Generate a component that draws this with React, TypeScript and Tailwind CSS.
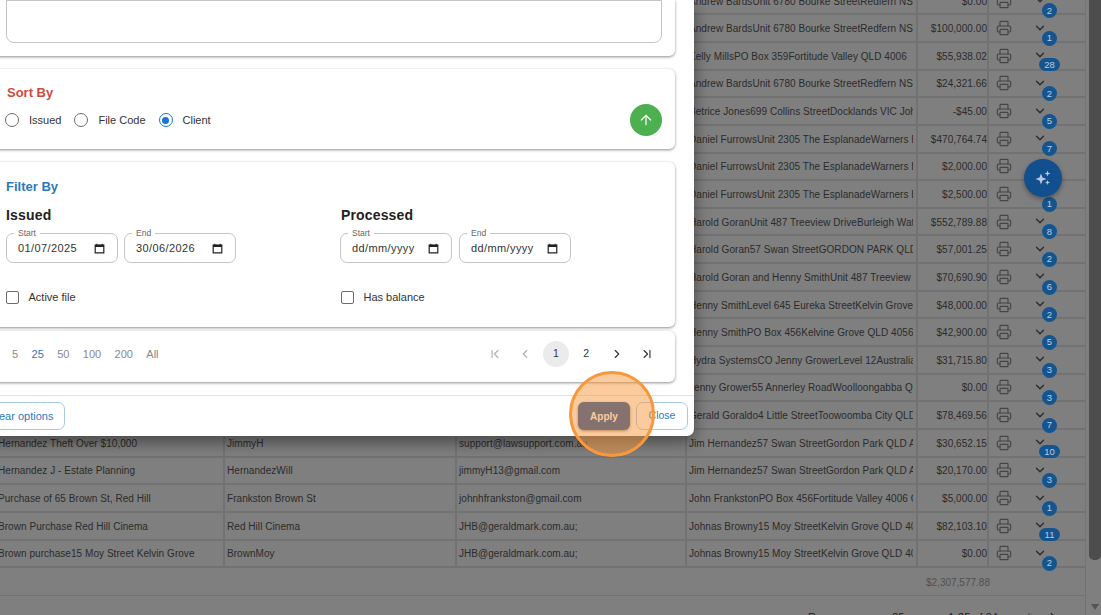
import { ArrowUp, ChevronDown, ChevronFirst, ChevronLast, ChevronLeft, ChevronRight, Printer } from "lucide-react";

const font = { fontFamily: '"Liberation Sans", Arial, sans-serif' };

type Row = { a: string; b: string; c: string; d: string; amt: string; n: string };
const rows: Row[] = [
  { a: "", b: "", c: "", d: "Andrew BardsUnit 6780 Bourke StreetRedfern NSW 2016", amt: "$0.00", n: "2" },
  { a: "", b: "", c: "", d: "Andrew BardsUnit 6780 Bourke StreetRedfern NSW 2016", amt: "$100,000.00", n: "1" },
  { a: "", b: "", c: "", d: "Kelly MillsPO Box 359Fortitude Valley QLD 4006", amt: "$55,938.02", n: "28" },
  { a: "", b: "", c: "", d: "Andrew BardsUnit 6780 Bourke StreetRedfern NSW 2016", amt: "$24,321.66", n: "2" },
  { a: "", b: "", c: "", d: "Betrice Jones699 Collins StreetDocklands VIC John", amt: "-$45.00", n: "5" },
  { a: "", b: "", c: "", d: "Daniel FurrowsUnit 2305 The EsplanadeWarners Bay", amt: "$470,764.74", n: "7" },
  { a: "", b: "", c: "", d: "Daniel FurrowsUnit 2305 The EsplanadeWarners Bay", amt: "$2,000.00", n: "" },
  { a: "", b: "", c: "", d: "Daniel FurrowsUnit 2305 The EsplanadeWarners Bay", amt: "$2,500.00", n: "1" },
  { a: "", b: "", c: "", d: "Harold GoranUnit 487 Treeview DriveBurleigh Waters", amt: "$552,789.88", n: "8" },
  { a: "", b: "", c: "", d: "Harold Goran57 Swan StreetGORDON PARK QLD 4031", amt: "$57,001.25", n: "2" },
  { a: "", b: "", c: "", d: "Harold Goran and Henny SmithUnit 487 Treeview Drive", amt: "$70,690.90", n: "6" },
  { a: "", b: "", c: "", d: "Henny SmithLevel 645 Eureka StreetKelvin Grove QLD", amt: "$48,000.00", n: "2" },
  { a: "", b: "", c: "", d: "Henny SmithPO Box 456Kelvine Grove QLD 4056", amt: "$42,900.00", n: "5" },
  { a: "", b: "", c: "", d: "Hydra SystemsCO Jenny GrowerLevel 12Australia", amt: "$31,715.80", n: "3" },
  { a: "", b: "", c: "", d: "Jenny Grower55 Annerley RoadWoolloongabba QLD", amt: "$0.00", n: "3" },
  { a: "", b: "", c: "", d: "Gerald Goraldo4 Little StreetToowoomba City QLD 4350", amt: "$78,469.56", n: "7" },
  { a: "Hernandez Theft Over $10,000", b: "JimmyH", c: "support@lawsupport.com.au", d: "Jim Hernandez57 Swan StreetGordon Park QLD Australia", amt: "$30,652.15", n: "10" },
  { a: "Hernandez J - Estate Planning", b: "HernandezWill", c: "jimmyH13@gmail.com", d: "Jim Hernandez57 Swan StreetGordon Park QLD Australia", amt: "$20,170.00", n: "3" },
  { a: "Purchase of 65 Brown St, Red Hill", b: "Frankston Brown St", c: "johnhfrankston@gmail.com", d: "John FrankstonPO Box 456Fortitude Valley 4006 QLD", amt: "$5,000.00", n: "1" },
  { a: "Brown Purchase Red Hill Cinema", b: "Red Hill Cinema", c: "JHB@geraldmark.com.au;", d: "Johnas Browny15 Moy StreetKelvin Grove QLD 4059", amt: "$82,103.10", n: "11" },
  { a: "Brown purchase15 Moy Street Kelvin Grove", b: "BrownMoy", c: "JHB@geraldmark.com.au;", d: "Johnas Browny15 Moy StreetKelvin Grove QLD 4059", amt: "$0.00", n: "2" },
];

const cols = "grid grid-cols-[234px_232px_230px_231px_71px_97px]";

function TableRow({ r }: { r: Row }) {
  const cell = "flex items-center overflow-hidden whitespace-nowrap border-r-2 border-[#727272] pt-[1px] pl-[2px]";
  return (
    <div className={`${cols} h-[27.65px] border-b-2 border-[#727272] text-[10px] tracking-[0.05px] text-[#2b2b2b]`}>
      <div className={`${cell} pl-[7px]`}>{r.a}</div>
      <div className={cell}>{r.b}</div>
      <div className={cell}>{r.c}</div>
      <div className={`${cell} pr-[3px]`}><span className="overflow-hidden">{r.d}</span></div>
      <div className={`${cell} justify-end pr-0`}>{r.amt}</div>
      <div className="relative flex items-center border-r border-[#757575]">
        <Printer size={16} strokeWidth={1.7} className="ml-[7px] text-[#454545]" />
        <ChevronDown size={14} strokeWidth={2.2} className="ml-[21px] -mt-[1px] text-[#2a2a2a]" />
        {r.n && (
          <span className={`absolute top-[15.5px] z-10 flex items-center justify-center rounded-full bg-[#15558f] text-[9.5px] text-[#b9cde2] ${r.n.length > 1 ? "left-[50px] h-[13px] w-[21px]" : "left-[53px] h-[15px] w-[15px]"}`}>
            {r.n}
          </span>
        )}
      </div>
    </div>
  );
}

function Radio({ label, checked }: { label: string; checked?: boolean }) {
  return (
    <label className="flex items-center gap-[10px]">
      <span className={`flex h-[14px] w-[14px] items-center justify-center rounded-full border-[1.5px] ${checked ? "border-[#1976d2]" : "border-[#6b6b6b]"}`}>
        {checked && <span className="h-[7px] w-[7px] rounded-full bg-[#1976d2]" />}
      </span>
      <span className="text-[11px] text-[#333]">{label}</span>
    </label>
  );
}

function Calendar() {
  return (
    <svg width="11" height="11" viewBox="0 0 11 11" className="shrink-0">
      <path d="M1.2 2.2h8.6v7.6H1.2z" fill="none" stroke="#222" strokeWidth="1.2" />
      <path d="M1 1.8h9v2.2H1z" fill="#222" />
      <path d="M2.8 .8v1.4M8.2 .8v1.4" stroke="#222" strokeWidth="1" />
    </svg>
  );
}

function DateField({ label, value, w }: { label: string; value: string; w: string }) {
  return (
    <div className={`relative flex h-[30px] items-center justify-between rounded-[7px] border border-[#c4c4c4] pl-[11px] pr-[12px] ${w}`}>
      <span className="absolute -top-[6px] left-[7px] bg-white px-[4px] text-[8.5px] leading-[10px] text-[#666]">{label}</span>
      <span className="text-[11px] tracking-[0.4px] text-[#333]">{value}</span>
      <Calendar />
    </div>
  );
}

function Check({ label }: { label: string }) {
  return (
    <label className="flex items-center gap-[9.5px]">
      <span className="h-[13px] w-[13px] rounded-[2px] border-[1.5px] border-[#6b6b6b]" />
      <span className="text-[11px] text-[#333]">{label}</span>
    </label>
  );
}

const cardShadow = "shadow-[0_1px_3px_rgba(0,0,0,0.45)]";

function Modal() {
  return (
    <div className="absolute -left-[20px] top-0 z-20 flex h-[436px] w-[714px] flex-col rounded-b-[7px] bg-white shadow-[0_6px_16px_rgba(0,0,0,0.45)]">
      <div className="pl-[20px] pr-[19px]">
        <div className={`-ml-[20px] h-[56px] rounded-b-[6px] bg-white pl-[26px] pr-[13px] ${cardShadow}`}>
          <div className="h-[43px] rounded-b-[8px] border border-[#c4c4c4]" />
        </div>

        <div className={`-ml-[20px] mt-[13px] flex h-[80px] rounded-[6px] bg-white pl-[25px] pr-[13px] pt-[15px] ${cardShadow}`}>
          <div className="flex-1">
            <div className="pl-[2px] text-[13px] font-bold leading-[18px] text-[#cf4a41]">Sort By</div>
            <div className="mt-[10px] flex gap-[13px]">
              <Radio label="Issued" />
              <Radio label="File Code" />
              <Radio label="Client" checked />
            </div>
          </div>
          <div className="mt-[20px] flex h-[32px] w-[32px] items-center justify-center rounded-full bg-[#4caf50]">
            <ArrowUp size={16} strokeWidth={1.8} className="text-white" />
          </div>
        </div>

        <div className={`-ml-[20px] mt-[13px] h-[165px] rounded-[6px] bg-white pl-[26px] pr-[13px] pt-[16px] ${cardShadow}`}>
          <div className="text-[13px] font-bold leading-[18px] text-[#2b7bba]">Filter By</div>
          <div className="mt-[11px] grid grid-cols-[335px_1fr]">
            <div>
              <div className="text-[14px] font-bold leading-[17px] tracking-[0.2px] text-[#222]">Issued</div>
              <div className="mt-[9px] flex gap-[6px]">
                <DateField label="Start" value="01/07/2025" w="w-[112px]" />
                <DateField label="End" value="30/06/2026" w="w-[112px]" />
              </div>
              <div className="mt-[26px]"><Check label="Active file" /></div>
            </div>
            <div>
              <div className="text-[14px] font-bold leading-[17px] tracking-[0.15px] text-[#222]">Processed</div>
              <div className="-ml-[1px] mt-[9px] flex gap-[7px]">
                <DateField label="Start" value="dd/mm/yyyy" w="w-[112px]" />
                <DateField label="End" value="dd/mm/yyyy" w="w-[112px]" />
              </div>
              <div className="mt-[26px]"><Check label="Has balance" /></div>
            </div>
          </div>
        </div>

        <div className={`-ml-[20px] mt-[4px] flex h-[51px] items-center justify-between rounded-[6px] bg-white pb-[5px] pl-[32px] pr-[15px] ${cardShadow}`}>
          <div className="flex gap-[13.4px] text-[11px] text-[#888]">
            <span>5</span>
            <span className="text-[#2b7bba]">25</span>
            <span>50</span>
            <span>100</span>
            <span>200</span>
            <span>All</span>
          </div>
          <div className="flex items-center gap-[4.4px] text-[10.5px] text-[#333]">
            <span className="flex h-[26px] w-[26px] items-center justify-center"><ChevronFirst size={14} className="text-[#b0b0b0]" /></span>
            <span className="flex h-[26px] w-[26px] items-center justify-center"><ChevronLeft size={14} className="text-[#b0b0b0]" /></span>
            <span className="flex h-[26px] w-[26px] items-center justify-center rounded-full bg-[#ebebeb]">1</span>
            <span className="flex h-[26px] w-[26px] items-center justify-center">2</span>
            <span className="flex h-[26px] w-[26px] items-center justify-center"><ChevronRight size={14} className="text-[#333]" /></span>
            <span className="flex h-[26px] w-[26px] items-center justify-center"><ChevronLast size={14} className="text-[#333]" /></span>
          </div>
        </div>
      </div>

      <div className="mt-[13px] flex h-[41px] items-start justify-between border-t border-[#e0e0e0] pl-[7px] pr-[6px] pt-[6px] text-[10.5px]">
        <button className="-ml-[10px] h-[28px] w-[88px] whitespace-nowrap rounded-[7px] border border-[#a5cbe4] text-[11px] text-[#2b7bba]">Clear options</button>
        <div className="flex gap-[6px]">
          <button className="h-[28px] w-[52px] rounded-[6px] bg-[#134a9f] text-[10px] font-bold text-white shadow-[0_1px_3px_rgba(0,0,0,0.5)]">Apply</button>
          <button className="h-[28px] w-[52px] rounded-[7px] border border-[#a5cbe4] text-[#2b7bba]">Close</button>
        </div>
      </div>
    </div>
  );
}

export default function App() {
  return (
    <div style={font} className="relative h-[615px] w-[1101px] overflow-hidden bg-[#7f7f7f]">
      <div className="flex h-full">
        <div className="-ml-[9px] -mt-[12.3px] w-[1095px] shrink-0">
          {rows.map((r, i) => <TableRow key={i} r={r} />)}
          <div className={`${cols} h-[28px] items-center border-b border-r border-[#727272] pt-[1px] text-[10px] text-[#505050]`}>
            <span className="col-span-2 col-start-5 pl-[8px]">$2,307,577.88</span>
          </div>
          <div className="flex h-[30px] items-start border-r border-[#727272] pl-[817px] pt-[15px] text-[11px] leading-[13px] text-[#222]">
            <span>Rows per page:</span>
            <span className="ml-[7px]">25</span>
            <span className="ml-[44px]">1-25 of 34</span>
            <ChevronLeft size={14} className="-mt-[1px] ml-[23px] text-[#555]" />
            <ChevronRight size={14} className="-mt-[1px] ml-[11px] text-[#222]" />
          </div>
        </div>
        <div className="ml-[3px] flex w-[12px] flex-col items-center">
          <div className="h-[560px] w-full rounded-b-[5px] bg-[#4d4d4d]" />
          <div className="mt-[44px] h-0 w-0 border-x-[4.5px] border-t-[6px] border-x-transparent border-t-[#555]" />
        </div>
      </div>

      <Modal />

      <div className="absolute left-[1024px] top-[159px] z-30 flex h-[38px] w-[38px] items-center justify-center rounded-full bg-[#124f8e] shadow-[0_2px_5px_rgba(0,0,0,0.35)]">
        <svg width="18" height="18" viewBox="0 0 18 18" fill="#b9c9dc">
          <path d="M7 4.5l1.5 4 4 1.5-4 1.5L7 15.5l-1.5-4-4-1.5 4-1.5z" />
          <path d="M13.5 1.5l.8 2.2 2.2.8-2.2.8-.8 2.2-.8-2.2-2.2-.8 2.2-.8z" />
          <path d="M13.5 11l.7 1.8 1.8.7-1.8.7-.7 1.8-.7-1.8-1.8-.7 1.8-.7z" />
        </svg>
      </div>

      <div className="absolute left-[569px] top-[371px] z-30 h-[86px] w-[86px] rounded-full border-[3px] border-[#f7983c] bg-[#f7983c]/50" />
    </div>
  );
}
